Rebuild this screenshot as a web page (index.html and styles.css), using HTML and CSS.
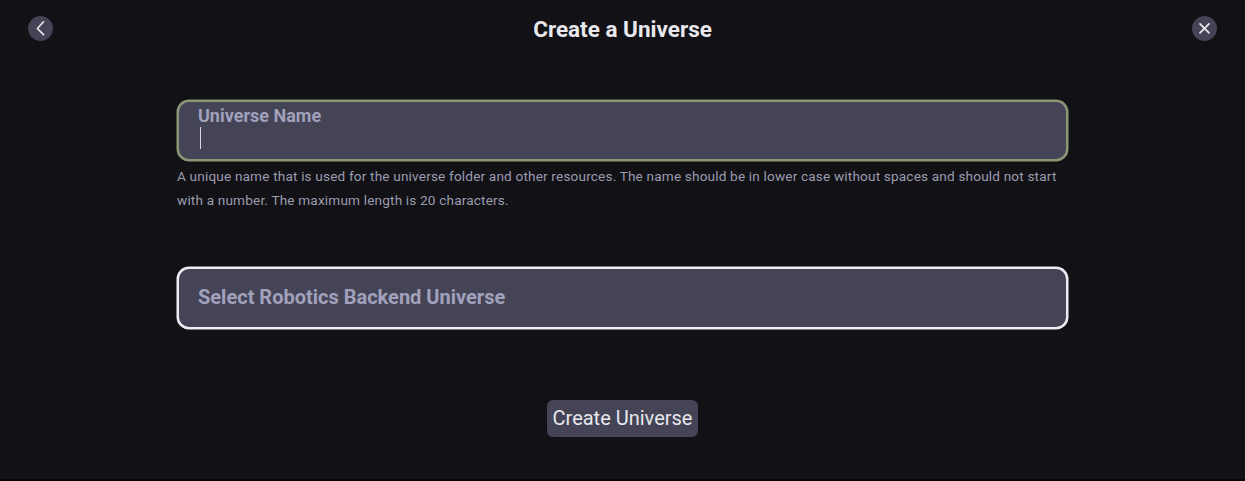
FILE: index.html
```html
<!DOCTYPE html>
<html lang="en">
<head>
<meta charset="utf-8">
<title>Create a Universe</title>
<link rel="stylesheet" href="styles.css">
</head>
<body>
<main class="modal">
  <header class="titlebar">
    <button class="round" aria-label="Back"><svg width="25" height="25" viewBox="0 0 25 25"><path d="M15.500 5.800 9.400 12.500l6.100 6.200"/></svg></button>
    <h1 class="title">Create a Universe</h1>
    <button class="round" aria-label="Close"><svg width="25" height="25" viewBox="0 0 25 25"><path d="M8 7.800l9 9M17 7.800l-9 9"/></svg></button>
  </header>
  <form class="form">
    <div class="field focused">
      <span class="label">Universe Name</span>
      <span class="caret"></span>
    </div>
    <p class="hint">A unique name that is used for the universe folder and other resources. The name should be in lower case without spaces and should not start<br>with a number. The maximum length is 20 characters.</p>
    <div class="field select"><span class="placeholder">Select Robotics Backend Universe</span></div>
    <button type="button" class="submit">Create Universe</button>
  </form>
</main>
</body>
</html>
```
FILE: styles.css
```css
* { box-sizing: border-box; }
body { margin: 0; background: #111116; font-family: Roboto, sans-serif; color: #e8e8ed; }
.modal { height: 481px; border-bottom: 2px solid #0a0507; overflow: hidden; }
.titlebar { display: flex; align-items: center; justify-content: space-between; height: 57px; padding: 0 28px; }
.round { display: flex; width: 25px; height: 25px; padding: 0; border: 0; border-radius: 50%; background: #444456; }
.round path { fill: none; stroke: #e8e8ed; stroke-width: 1.7; stroke-linecap: round; stroke-linejoin: round; }
.title { margin: 0; font-size: 22.5px; line-height: 28px; font-weight: 700; }
.form { display: flex; flex-direction: column; width: 891px; margin: 43px 0 0 177px; }
.field { height: 61px; border: 2px solid #edecf2; border-radius: 12px; background: #444456; padding: 0 19px; color: #a1a1bc; font-weight: 700; box-shadow: 0 0 0 0.5px #edecf2; }
.focused { border-color: #8b9674; box-shadow: 0 0 0 0.5px #8b9674; }
.label { display: block; margin-top: 3px; font-size: 18px; line-height: 21px; }
.caret { display: block; width: 1px; height: 22px; margin: 1px 0 0 2px; background: #d8d8e0; }
.hint { margin: 3px 0 0; font-size: 13.6px; line-height: 24px; letter-spacing: 0.17px; color: #9c9caf; white-space: nowrap; }
.select { display: flex; align-items: center; margin-top: 55px; height: 62px; }
.placeholder { margin-bottom: 2px; font-size: 20px; line-height: 24px; }
.submit { align-self: center; width: 151px; height: 37px; margin-top: 71px; padding: 0 0 1px; border: 0; border-radius: 6px; background: #444456; color: #e8e8ed; font: 400 20px/35px Roboto, sans-serif; }
```
